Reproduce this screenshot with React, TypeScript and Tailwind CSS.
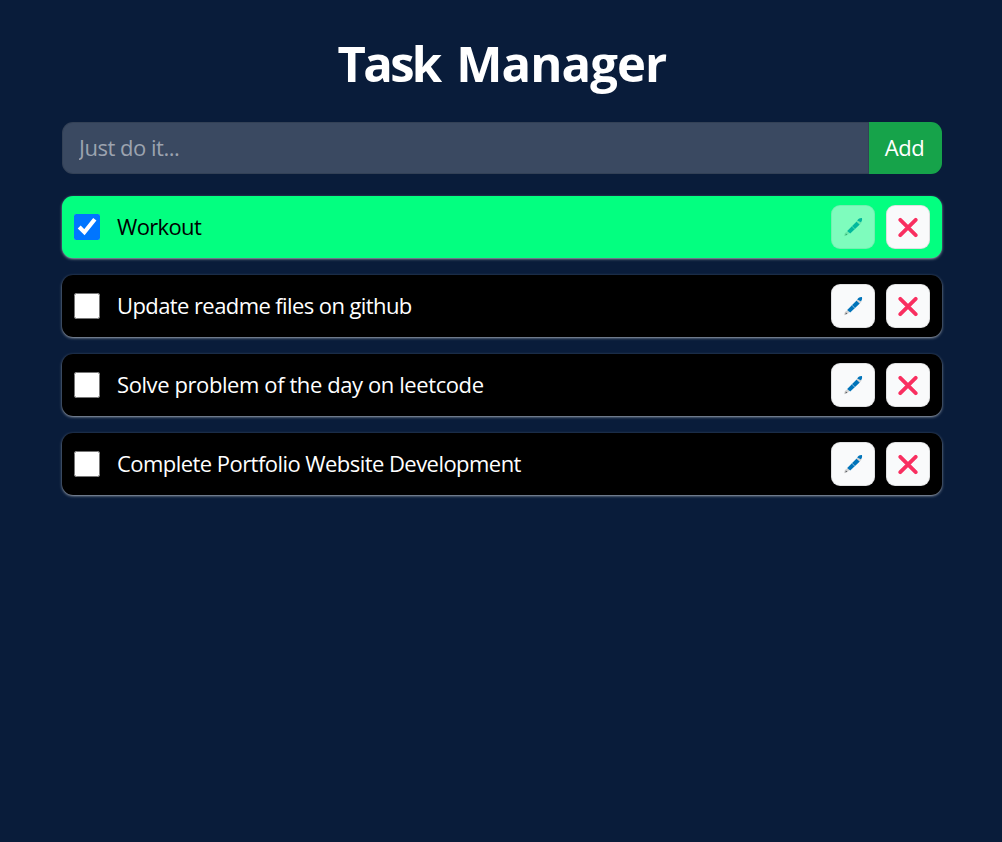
import { useState } from "react";

type Todo = { id: number; text: string; done: boolean; spacing: string };

const initialTodos: Todo[] = [
  { id: 1, text: "Workout", done: true, spacing: "tracking-[-0.65px]" },
  { id: 2, text: "Update readme files on github", done: false, spacing: "tracking-[-0.59px]" },
  { id: 3, text: "Solve problem of the day on leetcode", done: false, spacing: "tracking-[-0.41px]" },
  { id: 4, text: "Complete Portfolio Website Development", done: false, spacing: "tracking-[-0.55px]" },
];

function PenIcon() {
  return (
    <svg width="20" height="20" viewBox="0 0 20 20" aria-hidden="true">
      <path d="M1 19.2 1.9 16 4.9 14 6.6 16 4.2 18.2Z" fill="#d3d3d3" />
      <path d="M2.4 18.4 2.8 16.4 4.4 17.6Z" fill="#50545a" />
      <path d="M4.2 14 13.6 4.6 16.8 7.6 7.2 16.4Z" fill="#0074ba" />
      <path d="M13.6 4.4 15.4 2.4 18.7 5.4 16.9 7.4Z" fill="#d3d3d3" />
      <path d="M14.2 3.4C15.8 1.4 17.6.8 19 1.2 19.3 2.8 19 4.2 17.8 5.2Z" fill="#0074ba" />
      <path d="M9 9.2 11.6 12" stroke="#a9cde4" strokeWidth="0.8" />
    </svg>
  );
}

function CrossIcon() {
  return (
    <svg width="20" height="20" viewBox="0 0 20 20" className="translate-y-[0.5px]" aria-hidden="true">
      <path d="M2.3 2.3 17.7 17.7M17.7 2.3 2.3 17.7" stroke="#f92f60" strokeWidth="3.8" strokeLinecap="round" />
    </svg>
  );
}

function TodoItem({ todo, onToggle, onDelete }: { todo: Todo; onToggle: () => void; onDelete: () => void }) {
  const button =
    "flex h-11 w-11 shrink-0 items-center justify-center rounded-[9px] border border-black/10 bg-gray-50 disabled:opacity-50";
  return (
    <li
      className={`flex h-[62px] items-center rounded-[11px] pr-3 pl-3 shadow-[0_1px_3px_rgba(255,255,255,0.5),0_1px_2px_-1px_rgba(255,255,255,0.5)] ${
        todo.done ? "bg-[#03ff80] text-black" : "bg-black text-white"
      }`}
    >
      <input
        type="checkbox"
        checked={todo.done}
        onChange={onToggle}
        aria-label={todo.text}
        className="h-[26px] w-[26px] shrink-0 accent-[#0075ff]"
      />
      <span className={`ml-[17px] flex-1 pb-0.5 whitespace-nowrap ${todo.spacing}`}>{todo.text}</span>
      <button className={button} disabled={todo.done} aria-label="Edit">
        <PenIcon />
      </button>
      <button className={`${button} ml-[11px]`} onClick={onDelete} aria-label="Delete">
        <CrossIcon />
      </button>
    </li>
  );
}

export default function App() {
  const [todos, setTodos] = useState(initialTodos);
  const [text, setText] = useState("");

  const add = () => {
    if (!text.trim()) return;
    setTodos([{ id: Date.now(), text, done: false, spacing: "tracking-[-0.5px]" }, ...todos]);
    setText("");
  };

  return (
    <main className="min-h-screen bg-[#091c3a] pt-[29px] pr-[60px] pl-[62px] font-['Open_Sans','Noto_Sans',sans-serif] text-[22px] leading-8 text-white">
      <h1 className="text-center text-[49px] leading-[68px] font-bold">
        <span className="tracking-[-2.7px]">Task</span> <span className="ml-1 tracking-[-0.9px]">Manager</span>
      </h1>
      <form
        className="mt-[25px] flex h-[52px]"
        onSubmit={(e) => {
          e.preventDefault();
          add();
        }}
      >
        <input
          value={text}
          onChange={(e) => setText(e.target.value)}
          placeholder="Just do it..."
          className="min-w-0 flex-1 rounded-l-[11px] border border-black/10 bg-white/20 px-4 pb-0.5 tracking-[-0.48px] outline-none placeholder:text-[#9ca3af]"
        />
        <button className="w-[73px] shrink-0 rounded-r-[11px] bg-[#16a34a] pr-0.5 pb-0.5 tracking-[-0.4px]">Add</button>
      </form>
      <ul className="mt-[22px] flex flex-col gap-[17px]">
        {todos.map((todo) => (
          <TodoItem
            key={todo.id}
            todo={todo}
            onToggle={() => setTodos(todos.map((t) => (t.id === todo.id ? { ...t, done: !t.done } : t)))}
            onDelete={() => setTodos(todos.filter((t) => t.id !== todo.id))}
          />
        ))}
      </ul>
    </main>
  );
}
